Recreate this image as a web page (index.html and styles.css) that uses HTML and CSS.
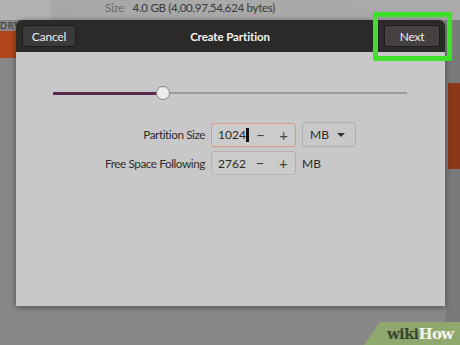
FILE: index.html
```html
<!DOCTYPE html>
<html>
<head>
    <title>Create Partition</title>
    <link rel="stylesheet" href="styles.css">
</head>
<body>
    <div class="backdrop">
        <div class="topStrip">
            <span class="sizeKey">Size</span>
            <span class="sizeVal">4.0 GB (4,00,97,54,624 bytes)</span>
        </div>
        <div class="drvLabel">DRV</div>
        <div class="leftOrange"></div>
        <div class="rightOrange"></div>
    </div>

    <div class="dialog">
        <div class="header">
            <button class="hdrBtn cancelBtn">Cancel</button>
            <span class="title">Create Partition</span>
            <button class="hdrBtn nextBtn">Next</button>
        </div>
        <div class="content">
            <div class="slider">
                <div class="fill"></div>
                <div class="knob"></div>
                <div class="rest"></div>
            </div>
            <div class="fields">
                <label class="lbl">Partition Size</label>
                <div class="spin focused">
                    <span class="val">1024<i class="caret"></i></span>
                    <span class="op">&minus;</span>
                    <span class="op">+</span>
                </div>
                <div class="unitSel">
                    <span>MB</span>
                    <span class="arrow"></span>
                </div>

                <label class="lbl">Free Space Following</label>
                <div class="spin">
                    <span class="val">2762</span>
                    <span class="op">&minus;</span>
                    <span class="op">+</span>
                </div>
                <div class="unit">MB</div>
            </div>
        </div>
    </div>

    <div class="highlight"></div>
    <div class="wikiLogo"><span class="wiki">wiki</span><span class="how">How</span></div>
</body>
</html>
```

FILE: styles.css
```css
body, html {
    margin: 0;
    padding: 0;
    width: 460px;
    height: 345px;
    overflow: hidden;
}
body {
    position: relative;
    background-color: #878787;
    font-family: Lato, "Noto Sans", sans-serif;
}
.backdrop {
    position: absolute;
    left: 0;
    top: 0;
    width: 460px;
    height: 345px;
    background: linear-gradient(to right, #888 0, #888 445px, #7a7a7a 446px, #7a7a7a 100%);
}
.topStrip {
    height: 20px;
    background: linear-gradient(to right, #b2b2b2 0, #b2b2b2 50px, #a8a8a8 51px, #aaaaaa 100%);
    font-size: 11.5px;
    letter-spacing: -0.3px;
    line-height: 16px;
    padding-left: 105px;
    box-sizing: border-box;
}
.sizeKey {
    color: #6a6a6a;
    margin-right: 6px;
}
.sizeVal {
    color: #3a3a3a;
}
.drvLabel {
    position: absolute;
    left: 0;
    top: 20px;
    font-size: 9px;
    color: #333;
    letter-spacing: 1px;
}
.leftOrange {
    position: absolute;
    left: 0;
    top: 31px;
    width: 18px;
    height: 27px;
    background-color: #b2461a;
}
.rightOrange {
    position: absolute;
    right: 0;
    top: 83px;
    width: 12px;
    height: 86px;
    background-color: #8c3718;
}

.dialog {
    position: relative;
    margin: 20px 0 0 16px;
    width: 429px;
    height: 286px;
    border-radius: 6px 6px 0 0;
    overflow: hidden;
    box-shadow: 0 1px 6px rgba(0, 0, 0, 0.45);
    display: flex;
    flex-direction: column;
}
.header {
    height: 32px;
    background-color: #2c2a28;
    display: flex;
    align-items: center;
    justify-content: space-between;
    padding: 0 5px 0 6px;
}
.hdrBtn {
    height: 22px;
    border: 1px solid #1d1b1a;
    border-radius: 3px;
    background-color: #3d3b39;
    color: #ececec;
    font-family: inherit;
    font-size: 12px;
    letter-spacing: -0.2px;
    padding: 0;
}
.cancelBtn {
    width: 54px;
}
.nextBtn {
    width: 56px;
    background-color: #444140;
}
.title {
    color: #f2f2f2;
    font-weight: bold;
    font-size: 11.5px;
    letter-spacing: -0.1px;
}
.content {
    flex: 1;
    background-color: #c8c8c8;
    padding-top: 34px;
}
.slider {
    display: flex;
    align-items: center;
    height: 14px;
    margin: 0 38px 0 37px;
}
.fill {
    width: 103px;
    height: 3px;
    background-color: #5c2850;
}
.knob {
    width: 12px;
    height: 12px;
    border: 1px solid #858585;
    border-radius: 50%;
    background-color: #ececec;
}
.rest {
    flex: 1;
    height: 2px;
    background-color: #9c9c9c;
}
.fields {
    display: grid;
    grid-template-columns: 189px 85px auto;
    column-gap: 6px;
    row-gap: 4px;
    margin-top: 22px;
    align-items: center;
}
.lbl {
    text-align: right;
    font-size: 11.8px;
    letter-spacing: -0.45px;
    color: #2e2e2e;
}
.spin {
    height: 24px;
    box-sizing: border-box;
    border: 1px solid #b3b3b3;
    border-radius: 3px;
    background-color: #cbcbcb;
    display: flex;
    align-items: center;
    font-size: 12px;
    color: #2a2a2a;
}
.spin.focused {
    border-color: #d89a86;
}
.val {
    width: 31px;
    padding-left: 6px;
    display: flex;
    align-items: center;
}
.caret {
    display: inline-block;
    width: 4px;
    height: 14px;
    background-color: #111;
}
.op {
    width: 24px;
    text-align: center;
    color: #444;
    font-size: 15px;
}
.unitSel {
    width: 54px;
    height: 25px;
    box-sizing: border-box;
    border: 1px solid #adadad;
    border-radius: 3px;
    display: flex;
    align-items: center;
    justify-content: space-between;
    padding: 0 10px 0 7px;
    font-size: 12px;
    color: #2a2a2a;
}
.arrow {
    width: 0;
    height: 0;
    border-left: 4px solid transparent;
    border-right: 4px solid transparent;
    border-top: 4px solid #333;
}
.unit {
    font-size: 12px;
    color: #2a2a2a;
}

.highlight {
    position: absolute;
    left: 373px;
    top: 12px;
    width: 79px;
    height: 49px;
    box-sizing: border-box;
    border: 5px solid #3fe02a;
    border-radius: 2px;
}
.wikiLogo {
    position: absolute;
    left: 364px;
    top: 322px;
    width: 96px;
    height: 23px;
    background-color: #8ea86e;
    clip-path: polygon(16px 0, 100% 0, 100% 100%, 0 100%);
    font-family: "DejaVu Serif", serif;
    font-weight: bold;
    font-size: 15px;
    line-height: 24px;
    padding-left: 23px;
    box-sizing: border-box;
    letter-spacing: -0.8px;
}
.wiki {
    color: #3b4630;
}
.how {
    color: #f4f4f0;
}
```
